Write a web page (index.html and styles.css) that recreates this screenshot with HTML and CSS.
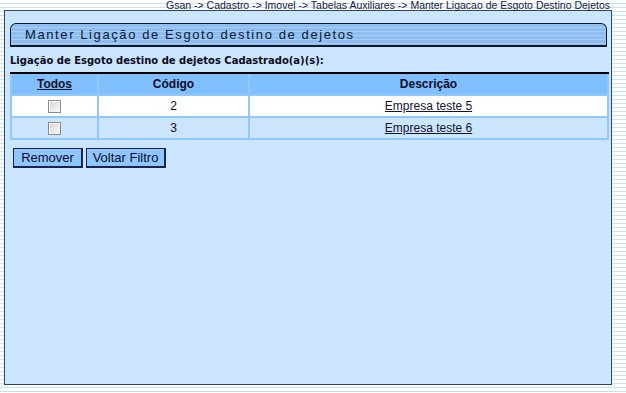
FILE: index.html
```html
<!DOCTYPE html>
<html lang="pt-BR">
<head>
    <meta charset="UTF-8">
    <title>Manter Ligação de Esgoto destino de dejetos</title>
    <link rel="stylesheet" href="styles.css">
</head>
<body>
    <div class="breadcrumb">Gsan -&gt; Cadastro -&gt; Imovel -&gt; Tabelas Auxiliares -&gt; Manter Ligacao de Esgoto Destino Dejetos</div>

    <div class="panel">
        <div class="title-bar">Manter Ligação de Esgoto destino de dejetos</div>

        <div class="list-title">Ligação de Esgoto destino de dejetos Cadastrado(a)(s):</div>

        <table class="grid">
            <thead>
                <tr>
                    <th class="col-check"><a href="#">Todos</a></th>
                    <th class="col-code">Código</th>
                    <th class="col-desc">Descrição</th>
                </tr>
            </thead>
            <tbody>
                <tr class="row-even">
                    <td><input type="checkbox"></td>
                    <td>2</td>
                    <td><a href="#">Empresa teste 5</a></td>
                </tr>
                <tr class="row-odd">
                    <td><input type="checkbox"></td>
                    <td>3</td>
                    <td><a href="#">Empresa teste 6</a></td>
                </tr>
            </tbody>
        </table>

        <div class="actions">
            <button class="btn btn-remove">Remover</button>
            <button class="btn btn-back">Voltar Filtro</button>
        </div>
    </div>
</body>
</html>
```

FILE: styles.css
```css
html, body {
    margin: 0;
    padding: 0;
}
body {
    width: 626px;
    height: 393px;
    overflow: hidden;
    background: repeating-linear-gradient(180deg, #ffffff 0px, #ffffff 3px, #c4e4f6 3px, #c4e4f6 4px);
    font-family: "Liberation Sans", Arial, sans-serif;
    color: #0b0b2a;
}
.breadcrumb {
    height: 10px;
    line-height: 10px;
    font-size: 10.5px;
    text-align: right;
    padding-right: 16px;
    color: #1a1a3a;
    position: relative;
    z-index: 1;
}
.panel {
    margin-left: 4px;
    width: 608px;
    height: 375px;
    background: #cbe5fd;
    border: 1px solid #2c4664;
    padding: 12px 4px 0 5px;
    box-sizing: border-box;
}
.title-bar {
    height: 24px;
    box-sizing: border-box;
    border: 1px solid #0e1a2c;
    border-bottom-width: 2px;
    border-radius: 6px 6px 0 0;
    background: repeating-linear-gradient(180deg, #8fbdef 0px, #8fbdef 3px, #a7cdf6 3px, #a7cdf6 4px);
    font-size: 13px;
    line-height: 21px;
    letter-spacing: 1.6px;
    padding-left: 14px;
    color: #0a1a36;
}
.list-title {
    font-family: "DejaVu Sans", Verdana, sans-serif;
    font-weight: bold;
    font-size: 10px;
    margin-top: 8px;
    height: 12px;
    line-height: 12px;
    color: #0b0b20;
}
.grid {
    margin-top: 5px;
    width: 599px;
    border-collapse: separate;
    border-spacing: 0;
    border-top: 2px solid #000;
    font-size: 12px;
    text-align: center;
}
.grid th,
.grid td {
    border-right: 2px solid #90c8fd;
    border-bottom: 2px solid #90c8fd;
    height: 20px;
    padding: 0;
}
.grid th:first-child,
.grid td:first-child {
    border-left: 2px solid #90c8fd;
}
.grid th {
    background: #80bffd;
    font-weight: bold;
}
.grid a {
    color: #13132e;
    text-decoration: underline;
}
.col-check {
    width: 85px;
}
.col-code {
    width: 149px;
}
.row-even td {
    background: #ffffff;
}
.row-odd td {
    background: #cbe5fd;
}
.grid input[type="checkbox"] {
    -webkit-appearance: none;
    appearance: none;
    margin: 0;
    width: 13px;
    height: 13px;
    box-sizing: border-box;
    border: 1px solid #8c8c8c;
    box-shadow: inset 1px 1px 0 #ffffff;
    background: linear-gradient(135deg, #d4d4d4 0%, #ececec 60%, #f8f8f8 100%);
    vertical-align: middle;
}
.actions {
    margin-top: 8px;
    display: flex;
    gap: 3px;
    padding-left: 3px;
}
.btn {
    height: 20px;
    margin: 0;
    padding: 0;
    background: #8fc6fd;
    border: 1px solid #1a2450;
    border-right-width: 2px;
    border-bottom-width: 2px;
    font-family: "Liberation Sans", Arial, sans-serif;
    font-size: 13px;
    color: #0b0b2a;
}
.btn-remove {
    width: 70px;
}
.btn-back {
    width: 80px;
}
```
